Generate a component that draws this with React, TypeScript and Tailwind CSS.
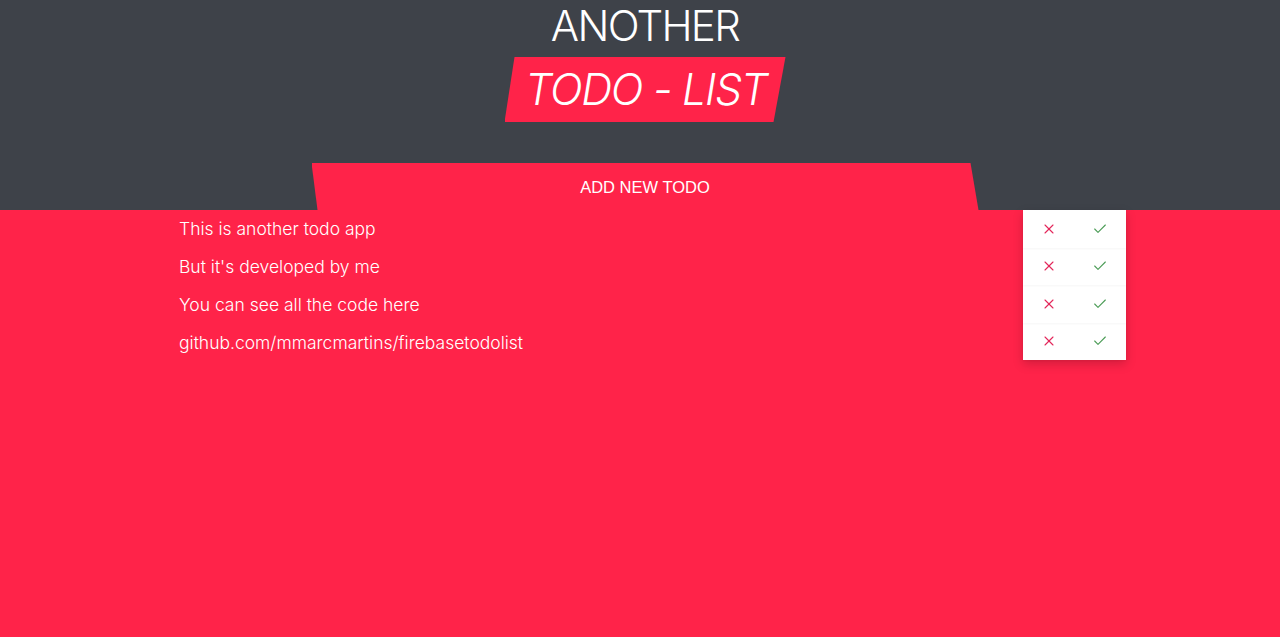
import React from 'react';
import { X, Check } from 'lucide-react';

const todos = [
    'This is another todo app',
    "But it's developed by me",
    'You can see all the code here',
    'github.com/mmarcmartins/firebasetodolist',
];

const App: React.FC = () => {
    return (
        <div className="min-h-[637px] bg-[#ff2349] font-['Inter',sans-serif] font-light text-white">
            <header className="bg-[#3e4249] h-[210px] flex flex-col items-center pl-[10px]">
                <h1 className="text-[42px] leading-[50px] tracking-[-0.04em] mt-[1px]">ANOTHER</h1>
                <div className="mt-[6px] w-[281px] h-[65px] bg-[#ff2349] [clip-path:polygon(10px_0,100%_0,calc(100%-12px)_100%,0_100%)] flex items-center justify-center">
                    <span className="italic text-[43px] leading-none tracking-[-0.03em] pl-[2px]">TODO - LIST</span>
                </div>
                <button className="mt-[41px] w-[667px] h-[47px] bg-[#ff2349] [clip-path:polygon(0_0,659px_0,100%_100%,6px_100%)] font-['Liberation_Sans',sans-serif] font-normal text-[16.5px] text-white pt-[1px]">
                    ADD NEW TODO
                </button>
            </header>

            <main className="ml-[179px] w-[947px] flex justify-between">
                <ul className="pt-[7px]">
                    {todos.map((t) => (
                        <li key={t} className="h-[38px] text-[17.5px] leading-[24px]">
                            {t}
                        </li>
                    ))}
                </ul>
                <div className="w-[103px] bg-white shadow-[0_4px_10px_rgba(0,0,0,0.18)] self-start">
                    {todos.map((t) => (
                        <div key={t} className="h-[37.5px] flex items-center justify-around shadow-[0_1px_2px_rgba(0,0,0,0.04)]">
                            <X className="w-[16px] h-[16px] text-[#e3265a]" strokeWidth={1.6} />
                            <Check className="w-[16px] h-[16px] text-[#4a9b55]" strokeWidth={1.6} />
                        </div>
                    ))}
                </div>
            </main>
        </div>
    );
};

export default App;
